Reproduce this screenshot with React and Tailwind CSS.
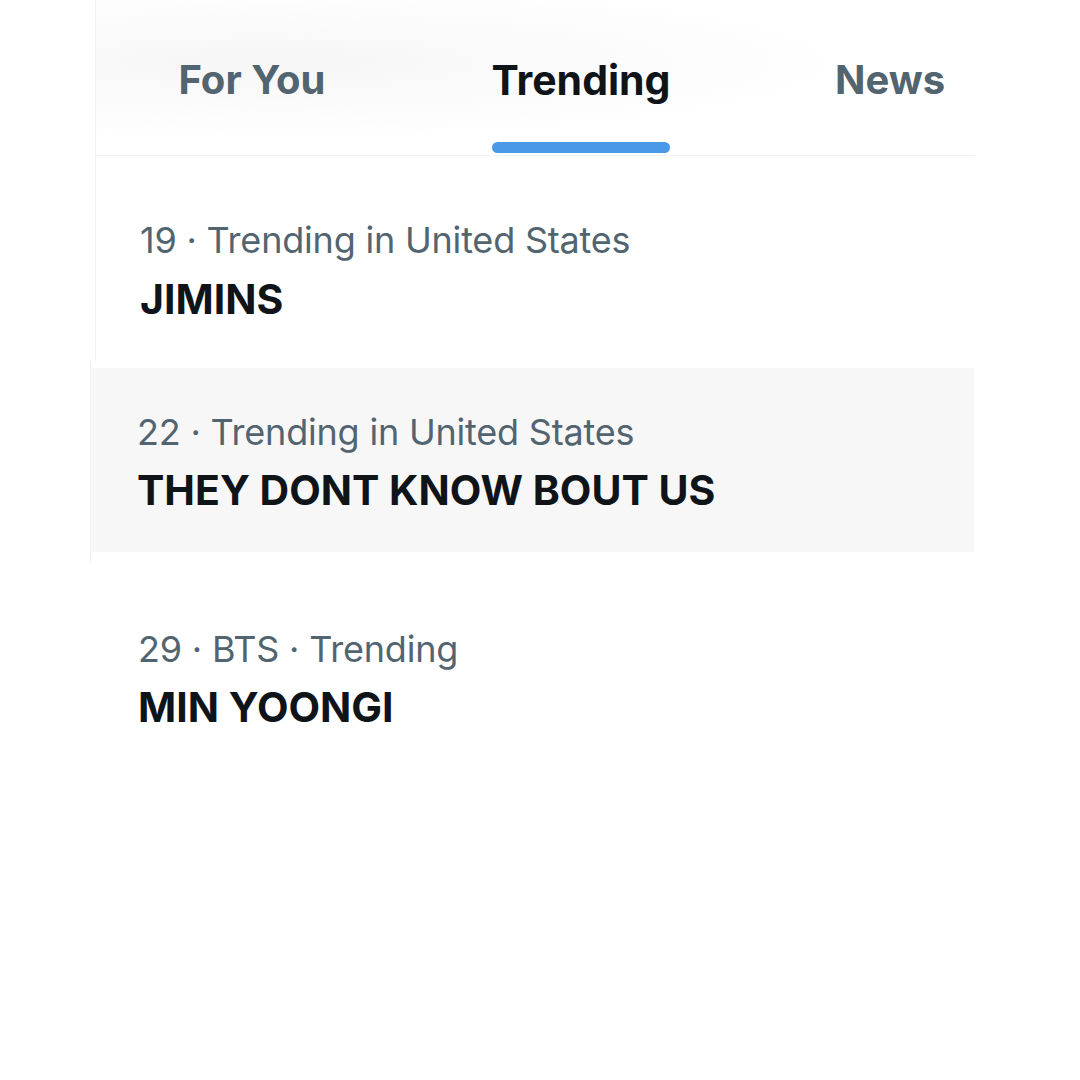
import React from "react";

const tabs = [
	{ label: "For You", active: false },
	{ label: "Trending", active: true },
	{ label: "News", active: false },
];

const Meta = ({ children }) => (
	<p className="text-[36px] leading-[40px] text-[#536471] tracking-[-0.2px]">{children}</p>
);

const Title = ({ children, className = "" }) => (
	<p className={`text-[41px] leading-[48px] font-bold text-[#0f1419] ${className}`}>{children}</p>
);

const App = () => {
	return (
		<div className="w-[1080px] h-[1080px] bg-white overflow-hidden" style={{ fontFamily: "Inter, 'Noto Sans', sans-serif" }}>
			<div className="ml-[95px] w-[880px] border-l border-[#eff3f4]">
				<div className="h-[156px] border-b border-[#eff3f4] flex pl-[56px] bg-[radial-gradient(ellipse_at_20%_40%,#f6f6f6_0%,#ffffff_60%)]">
					{tabs.map((tab, i) => (
						<div
							key={`tab_${i}`}
							className={`w-[200px] shrink-0 flex flex-col items-center ${i === 1 ? "ml-[129px]" : ""} ${i === 2 ? "ml-[109px]" : ""}`}
						>
							<span
								className={`mt-[55px] text-[40px] leading-[50px] font-bold ${
									tab.active ? "text-[#0f1419] text-[41px]" : "text-[#536471]"
								}`}
							>
								{tab.label}
							</span>
							{tab.active && <span className="mt-[37px] h-[11px] w-[178px] rounded-full bg-[#4a99e9]" />}
						</div>
					))}
				</div>
				<div className="pt-[64px] pb-[38px] pl-[44px]">
					<Meta>19 · Trending in United States</Meta>
					<Title className="mt-[15px]">JIMINS</Title>
				</div>
			</div>

			<div className="ml-[90px] w-[884px] border-l border-[#eff3f4] pt-[7px] pb-[12px]">
				<div className="bg-[#f7f7f7] pt-[44px] pb-[38px] pl-[46px]">
					<Meta>22 · Trending in United States</Meta>
					<Title className="mt-[14px]">THEY DONT KNOW BOUT US</Title>
				</div>
			</div>

			<div className="ml-[138px] pt-[65px]">
				<Meta>29 · BTS · Trending</Meta>
				<Title className="mt-[14px]">MIN YOONGI</Title>
			</div>
		</div>
	);
};

export default App;
